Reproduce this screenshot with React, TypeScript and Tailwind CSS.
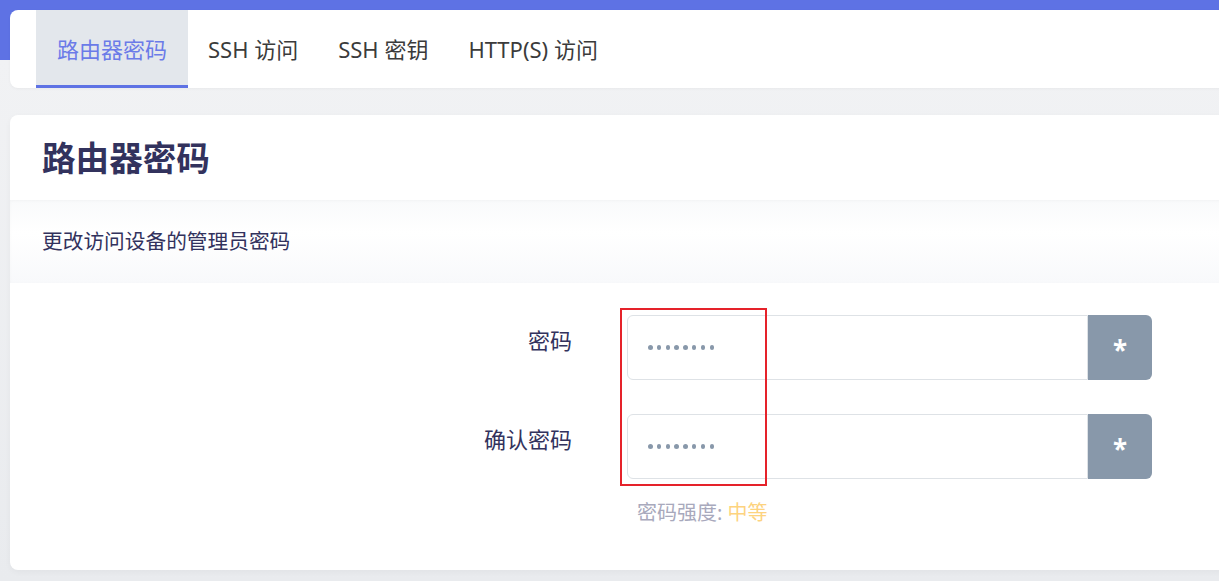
import React from "react";

const font = { fontFamily: '"Noto Sans", "Noto Sans CJK SC", sans-serif' };

function Dots() {
  return (
    <div className="flex items-center gap-[4.3px]">
      {Array.from({ length: 8 }).map((_, i) => (
        <span key={i} className="block h-[4.5px] w-[4.5px] rounded-full bg-[#8898aa]" />
      ))}
    </div>
  );
}

function Row({ label }: { label: string }) {
  return (
    <div className="flex items-start">
      <div className="w-[562px] pt-[7px] pr-0 text-right text-[22px] leading-[36px] text-[#32325d]">{label}</div>
      <div className="ml-[55px] flex h-[65px]">
        <div className="flex w-[461px] items-center rounded-l-[6px] border border-[#dee2e6] bg-white pl-[20px]">
          <Dots />
        </div>
        <div className="flex w-[64px] items-center justify-center rounded-r-[6px] bg-[#8898aa] text-[26px] font-bold text-white pt-[6px]">
          *
        </div>
      </div>
    </div>
  );
}

export default function App() {
  return (
    <div
      className="relative h-[581px] w-[1219px] overflow-hidden bg-[linear-gradient(to_bottom,#5e72e4_0px,#5e72e4_60px,#f1f2f4_60px,#e9ebee_100%)] pl-[10px] pt-[10px]"
      style={font}
    >
      <div className="mr-[-20px] flex h-[78px] rounded-l-[8px] bg-white pl-[26px] shadow-[0_1px_3px_rgba(0,0,0,0.04)]">
        <div className="flex items-center border-b-[3px] border-[#5e72e4] bg-[#e3e7ec] px-[21px] pt-[3px] text-[22px] text-[#6b7be8]">
          路由器密码
        </div>
        <div className="flex items-center px-[20px] text-[22px] text-[#3b3b3b]">SSH 访问</div>
        <div className="flex items-center px-[20px] text-[22px] text-[#3b3b3b]">SSH 密钥</div>
        <div className="flex items-center px-[20px] text-[22px] text-[#3b3b3b]">HTTP(S) 访问</div>
      </div>

      <div className="mr-[-20px] mt-[27px] flex h-[455px] flex-col rounded-l-[8px] bg-white shadow-[0_2px_6px_rgba(0,0,0,0.04)]">
        <div className="flex h-[85px] items-center pl-[32px] pt-[2px] text-[33.6px] font-bold text-[#32325d]">
          路由器密码
        </div>
        <div className="flex h-[83px] items-center bg-[linear-gradient(to_bottom,#f9fafb,#ffffff_40%,#f8f9fb)] pl-[32px] text-[20.7px] text-[#32325d] shadow-[inset_0_1px_3px_rgba(0,0,0,0.03)]">
          更改访问设备的管理员密码
        </div>
        <div className="flex flex-col gap-[34px] pt-[32px]">
          <Row label="密码" />
          <Row label="确认密码" />
        </div>
        <div className="mt-[19px] pl-[627px] text-[20px] leading-[30px] text-[#a8a9bc]">
          密码强度: <span className="text-[#fdd37f]">中等</span>
        </div>
      </div>

      <div className="pointer-events-none absolute left-[620px] top-[308px] h-[178px] w-[147px] border-2 border-[#e5222a]" />
    </div>
  );
}
